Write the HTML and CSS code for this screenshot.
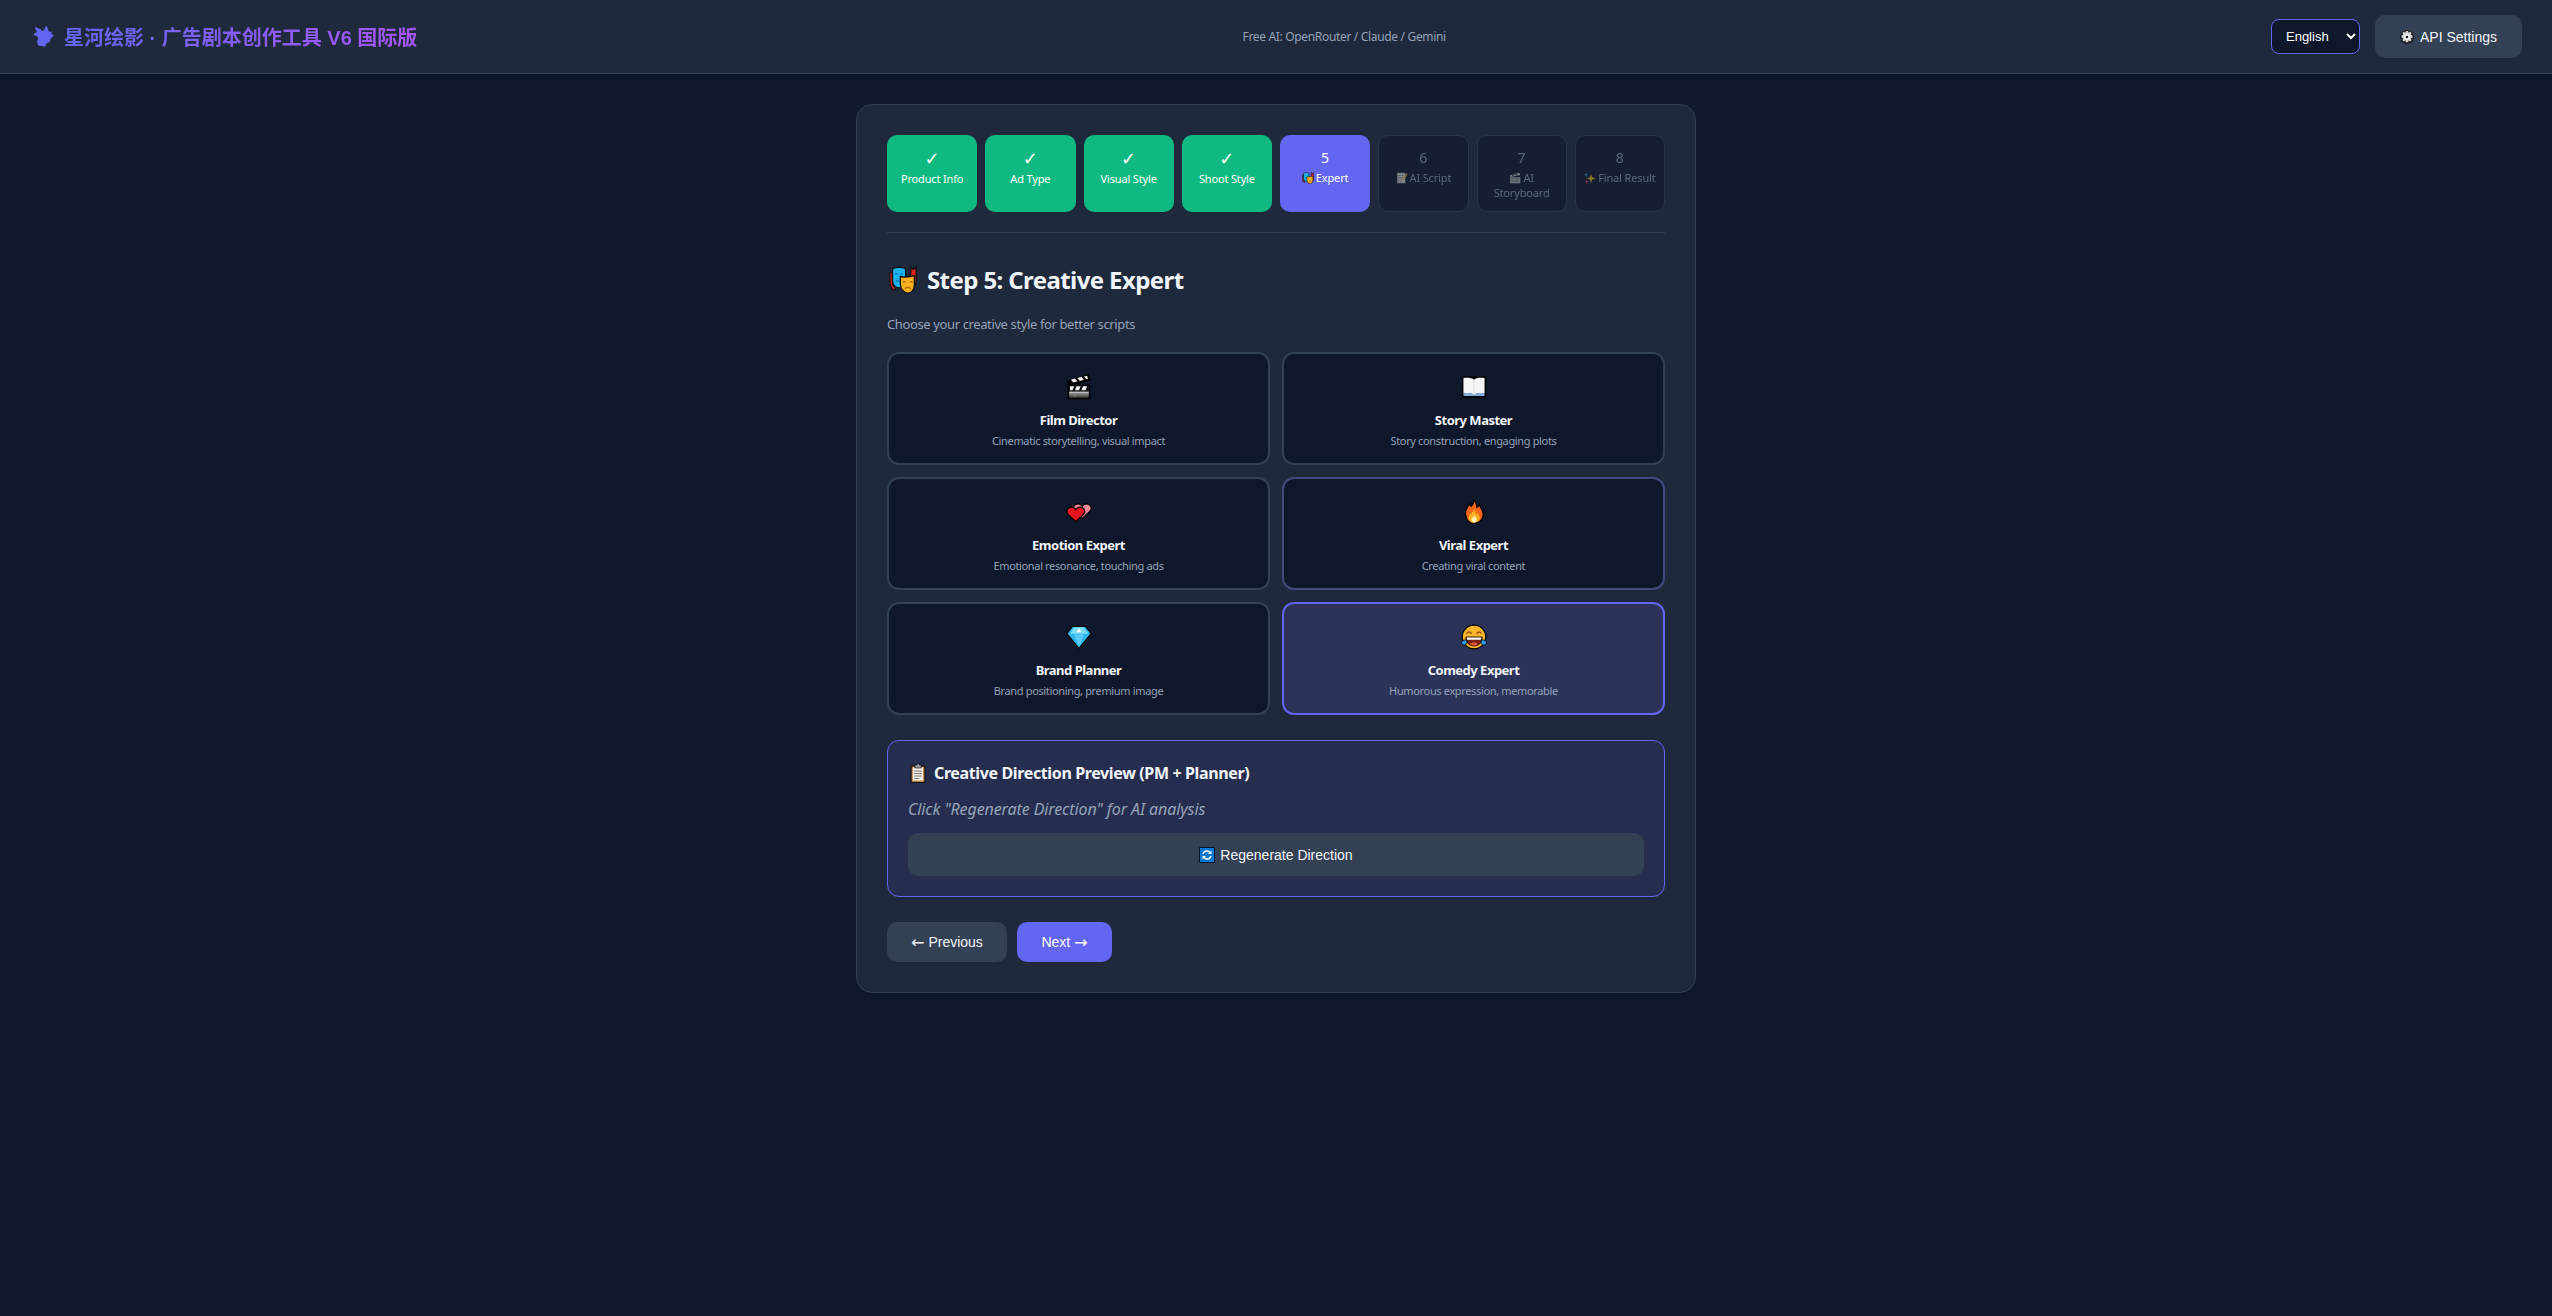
FILE: index.html
```html
<!DOCTYPE html>
<html lang="zh">
<head>
<meta charset="utf-8">
<title>星河绘影</title>
<link rel="stylesheet" href="styles.css">
</head>
<body>
<svg class="sprite" xmlns="http://www.w3.org/2000/svg">
  <symbol id="e-logo" viewBox="0 0 24 24"><path fill="#6366f1" stroke="#6366f1" stroke-width="1.600" stroke-linejoin="round" d="M15 2L16.500 6.500 18 8 20 7.500 18.500 9.500 22 11 18.500 14 18 17 14.500 18.500 13 22 10 21 7 20.500 6 17 7.500 14 6 11 2.500 10 6 7.500 4 3 9 5.500 11 7.500 13 6z"/></symbol>
  <symbol id="e-masks" viewBox="0 0 32 32">
    <path fill="#e0231c" stroke="#111" stroke-width="1.500" d="M1 8l3-1v14l4 6H4l-3-6zM25 1l3 3 3-3v18l-3 7h-4z"/>
    <path fill="#19b4f0" stroke="#111" stroke-width="1.500" d="M4 3c5-2 10-2 15 0v12c0 6-3 10-7.500 10S4 21 4 15z"/>
    <path fill="none" stroke="#0b6fb0" stroke-width="1.500" d="M7 9h3M13 9h3M8 16c2 2 5 2 7 0"/>
    <path fill="#f9b21d" stroke="#111" stroke-width="1.500" d="M13 12c5 1 10 1 16-1v10c0 6-3 10-7 10s-9-4-9-10z"/>
    <path fill="none" stroke="#a8620a" stroke-width="1.500" d="M16 18h3M24 18h3M18 26c2-2 5-2 7 0"/>
  </symbol>
  <symbol id="e-clapper" viewBox="0 0 32 32">
    <path fill="#000" d="M2 13h28v18H2z"/>
    <path fill="#000" d="M1 8L28 0l3 8L4 15z"/>
    <path fill="#555" d="M4 15h24v14H4z"/>
    <path fill="#bbb" d="M4 22h24v2H4z"/>
    <path fill="#8a8a8a" d="M4 25h24v1H4zM10 24h1.500v4H10z"/>
    <path fill="#111" d="M4 15h24v6H4z"/>
    <path fill="#f2f2f2" d="M5 15h5l-2 5H5zM13 15h5l-2 5h-5zM21 15h5l-2 5h-5z"/>
    <path fill="#f2f2f2" d="M6 7l5-1.500 3 3.500-5 1.500zM14 5l5-1.500 3 3.500-5 1.500zM22 3l4-1 1 4-2 .5z"/>
  </symbol>
  <symbol id="e-book" viewBox="0 0 32 32">
    <path fill="#000" d="M1 3h30v26H1z"/>
    <path fill="#f6f6f6" d="M3 5c5-1 10-.500 13 2 3-2.500 8-3 13-2v19c-5-1-10-.500-13 2-3-2.500-8-3-13-2z"/>
    <path fill="#c9d2da" d="M15.500 7h1v19h-1z"/>
    <path fill="#7fb2de" d="M3 24c5-1 10-.500 13 2 3-2.500 8-3 13-2v3H3z"/>
  </symbol>
  <symbol id="e-hearts" viewBox="0 0 32 32">
    <path fill="#f08a96" stroke="#000" stroke-width="1.500" transform="translate(8 -4)" d="M12 28L2.500 19C-.5 15 2 10 7 10 9 10 11 11 12 13 13 11 15 10 17 10 22 10 25 15 21.500 19z"/>
    <path fill="#e8141f" stroke="#000" stroke-width="1.500" d="M12 28L2.500 19C-.5 15 2 10 7 10 9 10 11 11 12 13 13 11 15 10 17 10 22 10 25 15 21.500 19z"/>
  </symbol>
  <symbol id="e-fire" viewBox="2 0 28 32" preserveAspectRatio="none">
    <path fill="#f4651a" stroke="#000" stroke-width="1.500" d="M15 1c1 4 0 6-2 8-1-1-1.500-2-1.500-3-4 5-5.500 9-4.500 14 1 6 4 10 9 10s10-4 10-11c0-5-3-8-4-12-1 2-2 3-3 3 0-4-1-7-4-9z"/>
    <path fill="#fdb022" d="M16 12c0 4-5 6-6 11 0 3 3 6 6 6s7-3 6-7c0-2-2-3-2-5-1 1-1 2-2 2 0-3-1-5-2-7z"/>
    <path fill="#fff2a8" d="M16 20c-1 2-3 4-3 6 0 2 2 3 3 3s4-1 3-4c0-2-2-3-3-5z"/>
  </symbol>
  <symbol id="e-diamond" viewBox="0 0 32 32">
    <path fill="#2ab8ec" stroke="#000" stroke-width="1.500" d="M8 3h16l7 9-15 18L1 12z"/>
    <path fill="#7fdcf8" d="M10 4h12l5 8H5z"/>
    <path fill="#fff" d="M13 10l3-5 3 5z"/>
    <path fill="#59cdf4" d="M10 13h12l-6 15z"/>
  </symbol>
  <symbol id="e-joy" viewBox="0 0 32 32">
    <circle cx="16" cy="16" r="14.500" fill="#fbb62e" stroke="#000" stroke-width="1.500"/>
    <path fill="none" stroke="#a0560a" stroke-width="1.800" d="M7 12c1-3 4-3 6 0M19 12c2-3 5-3 6 0"/>
    <path fill="#7a1f12" stroke="#000" d="M6 16h20c0 7-4 11-10 11S6 23 6 16z"/>
    <path fill="#fff" d="M7 16.500h18l-.5 3h-17z"/>
    <path fill="#e8563c" d="M11 25c3-3 7-3 10 0-3 2-7 2-10 0z"/>
    <path fill="#2f9be8" stroke="#000" d="M1 21c2-1 5-2 6-1 1 3 0 6-3 6s-4-3-3-5zM31 21c-2-1-5-2-6-1-1 3 0 6 3 6s4-3 3-5z"/>
  </symbol>
  <symbol id="e-clip" viewBox="0 0 32 32">
    <path fill="#c98f55" stroke="#000" stroke-width="1.500" d="M5 5h22v26H5z"/>
    <path fill="#f4efe5" d="M8 7h16v21H8z"/>
    <path fill="#777" d="M10 12h12v1.500H10zM10 16h12v1.500H10zM10 20h12v1.500H10zM10 24h8v1.500H10z"/>
    <path fill="#9aa0a6" stroke="#000" d="M11 3h3l1-2h2l1 2h3v5H11z"/>
  </symbol>
  <symbol id="e-refresh" viewBox="0 0 32 32">
    <path fill="#0a78d7" stroke="#02152c" stroke-width="2" d="M1 1h30v30H1z"/>
    <path fill="none" stroke="#fff" stroke-width="3" d="M8 14a8 8 0 0 1 14-3M24 18a8 8 0 0 1-14 3"/>
    <path fill="#fff" d="M25 7v7h-7zM7 25v-7h7z"/>
  </symbol>
  <symbol id="e-gear" viewBox="0 0 32 32">
    <path fill="#1a1a1a" d="M12 0h8l1 4 4-2 5 5-2 4 4 1v8l-4 1 2 4-5 5-4-2-1 4h-8l-1-4-4 2-5-5 2-4-4-1v-8l4-1-2-4 5-5 4 2z"/>
    <path fill="#d4d4d4" d="M13.500 2h5l1 4 4-2 3 3-2 4 4 1.500v5l-4 1.500 2 4-3 3-4-2-1 4h-5l-1-4-4 2-3-3 2-4-4-1.500v-5l4-1.500-2-4 3-3 4 2z"/>
    <circle cx="16" cy="16" r="7" fill="#f2f2f2"/><circle cx="16" cy="16" r="3" fill="#222"/>
  </symbol>
  <symbol id="e-note" viewBox="0 0 32 32">
    <path fill="#e6e6e6" stroke="#222" d="M3 2h22v28H3z"/>
    <path fill="#888" d="M6 8h14v2H6zM6 13h14v2H6zM6 18h14v2H6zM6 23h10v2H6z"/>
    <path fill="#f4c542" d="M29 3l2 3-12 15-4 2 1-4z"/>
  </symbol>
  <symbol id="e-board" viewBox="0 0 32 32">
    <path fill="#cfcfcf" d="M3 14h27v16H3z"/>
    <path fill="#333" d="M5 17h23v2H5zM5 23h23v2H5z"/>
    <path fill="#cfcfcf" d="M2 9L28 2l2 6-26 5z"/>
    <path fill="#333" d="M8 8l4-1 2 3-4 1zM16 6l4-1 2 3-4 1z"/>
  </symbol>
  <symbol id="e-spark" viewBox="0 0 32 32">
    <path fill="#f6c500" d="M19 5l3 9 9 3-9 3-3 9-3-9-9-3 9-3z"/>
    <path fill="#27a6e6" d="M6 2l1.500 4L11 7.500 7.500 9 6 13 4.500 9 1 7.500 4.500 6z"/>
    <path fill="#e8496b" d="M7 20l1.500 4 3.500 1.500L8.500 27 7 31l-1.500-4L2 25.500 5.500 24z"/>
  </symbol>
</svg>

<header class="topbar">
  <h1 class="brand"><svg class="brand-icon"><use href="#e-logo"/></svg><span class="brand-text">星河绘影 · 广告剧本创作工具 V6 国际版</span></h1>
  <div class="tagline">Free AI: OpenRouter / Claude / Gemini</div>
  <div class="top-actions">
    <select class="lang" aria-label="Language">
      <option>English</option>
      <option>中文</option>
    </select>
    <button class="btn btn-settings" type="button"><svg class="emoji-btn gear"><use href="#e-gear"/></svg>API Settings</button>
  </div>
</header>

<main class="page">
  <section class="panel">
    <ol class="steps">
      <li class="step done"><div class="step-num check">✓</div><div class="step-label">Product Info</div></li>
      <li class="step done"><div class="step-num check">✓</div><div class="step-label">Ad Type</div></li>
      <li class="step done"><div class="step-num check">✓</div><div class="step-label">Visual Style</div></li>
      <li class="step done"><div class="step-num check">✓</div><div class="step-label">Shoot Style</div></li>
      <li class="step active"><div class="step-num">5</div><div class="step-label"><svg class="emoji-sm"><use href="#e-masks"/></svg>Expert</div></li>
      <li class="step pending"><div class="step-num">6</div><div class="step-label"><svg class="emoji-sm"><use href="#e-note"/></svg>AI Script</div></li>
      <li class="step pending"><div class="step-num">7</div><div class="step-label"><svg class="emoji-sm"><use href="#e-board"/></svg>AI Storyboard</div></li>
      <li class="step pending"><div class="step-num">8</div><div class="step-label"><svg class="emoji-sm"><use href="#e-spark"/></svg>Final Result</div></li>
    </ol>

    <h2 class="step-title"><svg class="emoji-title"><use href="#e-masks"/></svg>Step 5: Creative Expert</h2>
    <p class="step-sub">Choose your creative style for better scripts</p>

    <div class="experts">
      <div class="expert"><svg class="expert-icon"><use href="#e-clapper"/></svg><div class="expert-name">Film Director</div><div class="expert-desc">Cinematic storytelling, visual impact</div></div>
      <div class="expert"><svg class="expert-icon"><use href="#e-book"/></svg><div class="expert-name">Story Master</div><div class="expert-desc">Story construction, engaging plots</div></div>
      <div class="expert"><svg class="expert-icon"><use href="#e-hearts"/></svg><div class="expert-name">Emotion Expert</div><div class="expert-desc">Emotional resonance, touching ads</div></div>
      <div class="expert hovered"><svg class="expert-icon"><use href="#e-fire"/></svg><div class="expert-name">Viral Expert</div><div class="expert-desc">Creating viral content</div></div>
      <div class="expert"><svg class="expert-icon"><use href="#e-diamond"/></svg><div class="expert-name">Brand Planner</div><div class="expert-desc">Brand positioning, premium image</div></div>
      <div class="expert selected"><svg class="expert-icon"><use href="#e-joy"/></svg><div class="expert-name">Comedy Expert</div><div class="expert-desc">Humorous expression, memorable</div></div>
    </div>

    <div class="preview">
      <h3 class="preview-title"><svg class="emoji-prev"><use href="#e-clip"/></svg>Creative Direction Preview (PM + Planner)</h3>
      <p class="preview-hint">Click "Regenerate Direction" for AI analysis</p>
      <button class="btn btn-regen" type="button"><svg class="emoji-btn refresh"><use href="#e-refresh"/></svg>Regenerate Direction</button>
    </div>

    <div class="nav">
      <button class="btn btn-prev" type="button"><span class="arrow">←</span>&nbsp;Previous</button>
      <button class="btn btn-next" type="button">Next&nbsp;<span class="arrow">→</span></button>
    </div>
  </section>
</main>
</body>
</html>
```

FILE: styles.css
```css
* { box-sizing: border-box; }

html, body { margin: 0; padding: 0; }

body {
  min-height: 100vh;
  background: #0f172a;
  color: #f1f5f9;
  font-family: "Noto Sans", "Noto Sans CJK SC", sans-serif;
}

.sprite { display: none; }

.topbar {
  display: flex;
  align-items: center;
  justify-content: space-between;
  height: 74px;
  padding: 0 30px;
  background: #1e293b;
  border-bottom: 1px solid #334155;
}

.brand {
  display: flex;
  align-items: center;
  margin: 0;
  font-size: 20px;
  font-weight: 700;
  font-family: "Liberation Sans", "Noto Sans CJK SC", sans-serif;
}

.brand-icon { width: 23px; height: 23px; margin: 0 9px 0 2px; flex: none; }

.brand-text {
  background: linear-gradient(90deg, #6366f1, #a855f7);
  -webkit-background-clip: text;
  background-clip: text;
  color: transparent;
}

.tagline { font-size: 12px; letter-spacing: -0.33px; color: #94a3b8; }

.top-actions { display: flex; align-items: center; gap: 15px; }

.lang {
  width: 89px;
  height: 35px;
  padding: 0 10px;
  background: #0f172a;
  color: #fff;
  border: 1px solid #6366f1;
  border-radius: 8px;
  font: 13px "Liberation Sans", sans-serif;
}

.btn {
  border: 0;
  color: #f1f5f9;
  font: 14px "Liberation Sans", sans-serif;
  display: flex;
  align-items: center;
  justify-content: center;
}

.arrow { font: 16px "DejaVu Sans", sans-serif; }

.emoji-btn { flex: none; }
.emoji-btn.gear { width: 14px; height: 14px; margin-right: 6px; }
.emoji-btn.refresh { width: 16px; height: 16px; margin-right: 5px; }

.btn-settings {
  width: 147px;
  height: 43px;
  background: #334155;
  border-radius: 10px;
}

.page { padding: 30px; }

.panel {
  width: 840px;
  margin: 0 auto;
  padding: 30px;
  background: #1e293b;
  border: 1px solid #334155;
  border-radius: 16px;
}

.steps {
  display: flex;
  gap: 8px;
  margin: 0 0 31px;
  padding: 0 0 20px;
  list-style: none;
  border-bottom: 1px solid #334155;
}

.step {
  flex: 1 1 0;
  min-width: 0;
  height: 77px;
  padding: 10px 6px 0;
  border: 1px solid transparent;
  border-radius: 10px;
  text-align: center;
}

.step-num { font-size: 14px; line-height: 24px; }
.step-num.check { font-size: 18px; line-height: 25px; font-family: "DejaVu Sans", sans-serif; }
.step-label { font-size: 11px; line-height: 15px; letter-spacing: -0.15px; }
.emoji-sm { width: 12px; height: 12px; margin-right: 2px; vertical-align: -2px; }

.step.done { background: #10b981; color: #fff; }
.step.active { background: #6366f1; color: #fff; }
.step.pending { background: #0f172a; border-color: #334155; color: #94a3b8; opacity: 0.5; }

.step-title {
  display: flex;
  align-items: center;
  margin: 0 0 19px;
  font-size: 24px;
  font-weight: 700;
  line-height: 32px;
  letter-spacing: -0.6px;
}

.emoji-title { width: 28px; height: 28px; margin: 0 10px 0 2px; flex: none; }

.step-sub { margin: 0 0 19px; font-size: 13px; line-height: 18px; letter-spacing: -0.38px; color: #94a3b8; }

.experts {
  display: grid;
  grid-template-columns: 1fr 1fr;
  gap: 12px;
  margin-bottom: 25px;
}

.expert {
  display: flex;
  flex-direction: column;
  align-items: center;
  height: 113px;
  padding: 20px 10px 0;
  background: #0f172a;
  border: 2px solid #334155;
  border-radius: 12px;
}

.expert.hovered { border-color: #414b80; }
.expert.selected { background: #2b3358; border-color: #6366f1; }

.expert-icon { width: 26px; height: 26px; flex: none; }
.expert-name { margin-top: 10px; font-size: 13px; font-weight: 700; line-height: 20px; letter-spacing: -0.5px; }
.expert-desc { margin-top: 3px; font-size: 11px; line-height: 16px; letter-spacing: -0.35px; color: #94a3b8; }

.preview {
  margin-bottom: 25px;
  padding: 20px;
  background: #262e4f;
  border: 1px solid #6366f1;
  border-radius: 12px;
}

.preview-title {
  display: flex;
  align-items: center;
  margin: 0 0 12px;
  font-size: 16px;
  font-weight: 700;
  line-height: 24px;
  letter-spacing: -0.37px;
}

.emoji-prev { width: 20px; height: 20px; margin-right: 6px; flex: none; }

.preview-hint {
  margin: 0 0 12px;
  font-size: 16px;
  line-height: 24px;
  letter-spacing: -0.1px;
  font-style: italic;
  color: #94a3b8;
}

.btn-regen {
  width: 100%;
  height: 43px;
  background: #334155;
  border-radius: 10px;
}

.nav { display: flex; gap: 10px; }

.btn-prev { width: 120px; height: 40px; background: #334155; border-radius: 10px; }
.btn-next { width: 95px; height: 40px; background: #6366f1; border-radius: 10px; color: #fff; }
```
